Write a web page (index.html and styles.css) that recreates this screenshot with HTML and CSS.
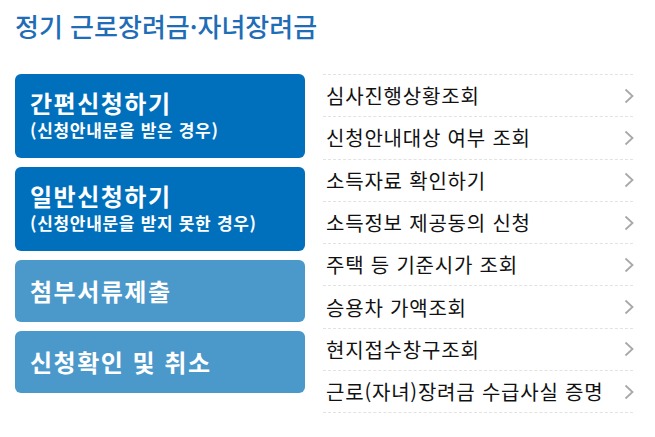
FILE: index.html
```html
<!DOCTYPE html>
<html lang="ko">
<head>
<meta charset="utf-8">
<title>정기 근로장려금·자녀장려금</title>
<link rel="stylesheet" href="styles.css">
</head>
<body>
<div class="page">
  <h1 class="title">정기 근로장려금·자녀장려금</h1>
  <div class="content">
    <div class="buttons">
      <a class="btn btn-dark btn-tall" href="#">
        <span class="btn-main">간편신청하기</span>
        <span class="btn-sub">(신청안내문을 받은 경우)</span>
      </a>
      <a class="btn btn-dark btn-tall" href="#">
        <span class="btn-main">일반신청하기</span>
        <span class="btn-sub">(신청안내문을 받지 못한 경우)</span>
      </a>
      <a class="btn btn-light" href="#">
        <span class="btn-main">첨부서류제출</span>
      </a>
      <a class="btn btn-light" href="#">
        <span class="btn-main">신청확인 및 취소</span>
      </a>
    </div>
    <ul class="links">
      <li><a href="#"><span>심사진행상황조회</span><svg class="chev" viewBox="0 0 10 16" width="10" height="16"><polyline points="1.5,1.5 8.5,8 1.5,14.5"/></svg></a></li>
      <li><a href="#"><span>신청안내대상 여부 조회</span><svg class="chev" viewBox="0 0 10 16" width="10" height="16"><polyline points="1.5,1.5 8.5,8 1.5,14.5"/></svg></a></li>
      <li><a href="#"><span>소득자료 확인하기</span><svg class="chev" viewBox="0 0 10 16" width="10" height="16"><polyline points="1.5,1.5 8.5,8 1.5,14.5"/></svg></a></li>
      <li><a href="#"><span>소득정보 제공동의 신청</span><svg class="chev" viewBox="0 0 10 16" width="10" height="16"><polyline points="1.5,1.5 8.5,8 1.5,14.5"/></svg></a></li>
      <li><a href="#"><span>주택 등 기준시가 조회</span><svg class="chev" viewBox="0 0 10 16" width="10" height="16"><polyline points="1.5,1.5 8.5,8 1.5,14.5"/></svg></a></li>
      <li><a href="#"><span>승용차 가액조회</span><svg class="chev" viewBox="0 0 10 16" width="10" height="16"><polyline points="1.5,1.5 8.5,8 1.5,14.5"/></svg></a></li>
      <li><a href="#"><span>현지접수창구조회</span><svg class="chev" viewBox="0 0 10 16" width="10" height="16"><polyline points="1.5,1.5 8.5,8 1.5,14.5"/></svg></a></li>
      <li><a href="#"><span>근로(자녀)장려금 수급사실 증명</span><svg class="chev" viewBox="0 0 10 16" width="10" height="16"><polyline points="1.5,1.5 8.5,8 1.5,14.5"/></svg></a></li>
    </ul>
  </div>
</div>
</body>
</html>
```

FILE: styles.css
```css
* { box-sizing: border-box; }
html, body { margin: 0; padding: 0; background: #fff; }
body {
  font-family: "Noto Sans CJK KR", "Noto Sans", sans-serif;
  color: #222;
}
.page { padding: 8px 15px 0 15px; }
.title {
  margin: 0;
  font-size: 26px;
  font-weight: 500;
  color: #1f6db6;
  line-height: 36px;
  letter-spacing: 0;
}
.content {
  display: flex;
  gap: 18px;
  margin-top: 30px;
}
.buttons {
  width: 290px;
  display: flex;
  flex-direction: column;
  gap: 9px;
}
.btn {
  display: flex;
  flex-direction: column;
  justify-content: center;
  padding: 0 15px;
  border-radius: 6px;
  color: #fff;
  text-decoration: none;
  height: 62px;
}
.btn-tall { height: 84px; }
.btn-dark { background: #0070bd; }
.btn-light { background: #4b98cb; }
.btn-main {
  font-size: 24px;
  font-weight: 700;
  line-height: 30px;
  letter-spacing: 1.5px;
}
.btn-tall .btn-main { margin-top: -2px; }
.btn-sub {
  font-size: 17px;
  font-weight: 700;
  line-height: 24px;
  letter-spacing: 0.7px;
}
.links {
  list-style: none;
  margin: 0;
  padding: 0;
  width: 310px;
  border-bottom: 1px dashed #e2e2e2;
}
.links li {
  border-top: 1px dashed #e2e2e2;
  height: 42.3px;
}
.links a {
  display: flex;
  align-items: center;
  justify-content: space-between;
  height: 100%;
  padding: 0 0 0 3px;
  color: #111;
  text-decoration: none;
  font-size: 20px;
  letter-spacing: 0.8px;
}
.chev {
  fill: none;
  stroke: #a8a8a8;
  stroke-width: 1.8;
  margin-right: -1px;
}
```
